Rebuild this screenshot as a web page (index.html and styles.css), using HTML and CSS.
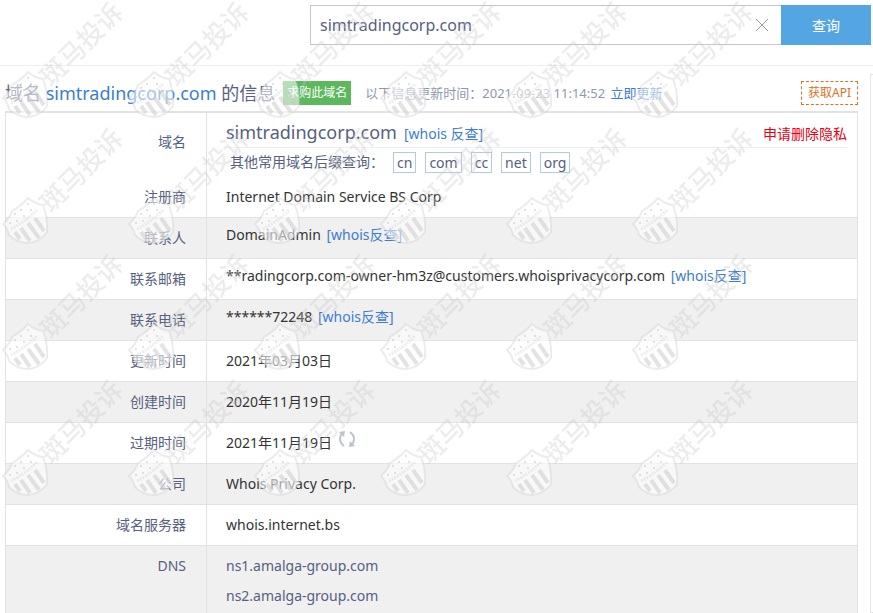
FILE: index.html
```html
<!DOCTYPE html>
<html lang="zh-CN">
<head>
    <meta charset="UTF-8">
    <meta name="viewport" content="width=device-width, initial-scale=1.0">
    <title>simtradingcorp.com 的信息</title>
    <link rel="stylesheet" href="styles.css">
</head>
<body>
    <header class="header">
        <form class="search" action="#">
            <div class="search-box">
                <input type="text" class="search-input" name="domain" value="simtradingcorp.com" aria-label="域名">
                <button type="reset" class="search-clear" aria-label="清空">
                    <svg width="14" height="14" viewBox="0 0 14 14"><path d="M1 1L13 13M13 1L1 13" stroke="#9a9a9a" fill="none"/></svg>
                </button>
            </div>
            <button type="submit" class="search-btn">查询</button>
        </form>
    </header>

    <div class="page">
        <main class="main">
            <div class="title-bar">
                <h1 class="title">域名 <a href="#">simtradingcorp.com</a> 的信息</h1>
                <a class="buy" href="#">求购此域名</a>
                <p class="updated">以下信息更新时间：2021-09-23 11:14:52 <a href="#">立即更新</a></p>
                <a class="api" href="#">获取API</a>
            </div>

            <table class="info">
                <tr class="plain">
                    <th scope="row">域名</th>
                    <td class="domain">
                        <div class="domain-line">
                            <span class="domain-name">simtradingcorp.com</span>
                            <a href="#">[whois 反查]</a>
                            <a class="privacy" href="#">申请删除隐私</a>
                        </div>
                        <div class="suffix-line">
                            <span class="suffix-label">其他常用域名后缀查询：</span>
                            <a href="#">cn</a>
                            <a href="#">com</a>
                            <a href="#">cc</a>
                            <a href="#">net</a>
                            <a href="#">org</a>
                        </div>
                    </td>
                </tr>
                <tr><th scope="row">注册商</th><td>Internet Domain Service BS Corp</td></tr>
                <tr class="gray contact"><th scope="row">联系人</th><td>DomainAdmin <a href="#">[whois反查]</a></td></tr>
                <tr class="contact"><th scope="row">联系邮箱</th><td>**radingcorp.com-owner-hm3z@customers.whoisprivacycorp.com <a href="#">[whois反查]</a></td></tr>
                <tr class="gray contact"><th scope="row">联系电话</th><td>******72248 <a href="#">[whois反查]</a></td></tr>
                <tr><th scope="row">更新时间</th><td>2021年03月03日</td></tr>
                <tr class="gray"><th scope="row">创建时间</th><td>2020年11月19日</td></tr>
                <tr>
                    <th scope="row">过期时间</th>
                    <td>2021年11月19日
                        <button type="button" class="refresh" aria-label="刷新">
                            <svg width="18" height="18" viewBox="0 0 18 18">
                                <path d="M4 3Q2 6 2 9Q2 13 6 16M14 15Q16 12 16 9Q16 5 12 2" fill="none" stroke="#bcc2ce" stroke-width="2"/>
                                <path d="M1 2L7 1L6 7ZM17 16L11 17L12 11Z" fill="#bcc2ce"/>
                            </svg>
                        </button>
                    </td>
                </tr>
                <tr class="gray"><th scope="row">公司</th><td>Whois Privacy Corp.</td></tr>
                <tr><th scope="row">域名服务器</th><td>whois.internet.bs</td></tr>
                <tr class="gray dns"><th scope="row">DNS</th><td>ns1.amalga-group.com<br>ns2.amalga-group.com</td></tr>
            </table>
        </main>
        <aside class="side"></aside>
    </div>

    <svg class="watermark" width="756" height="504" aria-hidden="true">
        <defs>
            <pattern id="mark" width="126" height="126" patternUnits="userSpaceOnUse">
                <path d="M3 98Q10 92 12 85Q21 80 28 72Q35 78 43 79Q48 92 47 106Q40 116 28 117Q17 117 9 109Q8 103 3 98Z" fill="#fff" fill-opacity=".55" stroke="#c8c8c8" stroke-opacity=".35" stroke-width="2" stroke-linejoin="round"/>
                <g stroke="#c8c8c8" stroke-opacity=".5" stroke-width="4">
                    <path d="M15 106L20 113M21 102L30 115M28 97L39 112M35 92L44 105"/>
                </g>
                <path d="M11 103Q25 96 37 84" fill="none" stroke="#c8c8c8" stroke-opacity=".3" stroke-width="3" stroke-dasharray="2 1"/>
                <g fill="#c8c8c8" fill-opacity=".7">
                    <circle cx="10" cy="97" r="1"/><circle cx="15" cy="88" r="1"/><circle cx="21" cy="84" r="1"/><circle cx="28" cy="78" r="1"/>
                    <circle cx="17" cy="95" r="1"/><circle cx="24" cy="90" r="1"/><circle cx="31" cy="84" r="1"/>
                </g>
                <text class="watermark-text" transform="translate(54 72) rotate(-45)" x="-13" y="9">斑马投诉</text>
            </pattern>
        </defs>
        <rect width="756" height="504" fill="url(#mark)"/>
    </svg>
</body>
</html>
```

FILE: styles.css
```css
* {
    box-sizing: border-box;
}
body {
    margin: 0;
    position: relative;
    overflow-x: hidden;
    background: #fff;
    color: #333;
    font-family: "Noto Sans", "Noto Sans CJK SC", sans-serif;
    font-size: 14px;
    line-height: 20px;
}
a {
    color: #3b7dd0;
    text-decoration: none;
}
button {
    font-family: inherit;
    cursor: pointer;
}
.header {
    padding: 5px 2px 20px;
    border-bottom: 1px solid #eee;
}
.search {
    display: flex;
    justify-content: flex-end;
}
.search-box {
    display: flex;
    flex: 0 1 471px;
    height: 40px;
    border: 1px solid #c3c7d4;
    border-right: none;
}
.search-input {
    flex: 1;
    min-width: 0;
    padding: 0 9px;
    border: none;
    outline: none;
    color: #566080;
    font-family: inherit;
    font-size: 16px;
}
.search-clear {
    display: flex;
    align-items: center;
    padding: 0 12px;
    border: none;
    background: none;
}
.search-btn {
    width: 90px;
    border: none;
    background: #54a6e2;
    color: #fff;
    font-size: 14px;
}
.page {
    display: flex;
}
.main {
    flex: 1;
    min-width: 0;
    padding: 0 12px 0 5px;
}
.side {
    width: 3px;
    margin-top: 8px;
    border: 1px solid #e4e4e4;
    border-right: none;
}
.title-bar {
    display: flex;
    align-items: center;
    height: 45px;
    padding-top: 8px;
}
.title {
    margin: 0 8px 0 0;
    color: #566080;
    font-size: 18px;
    font-weight: normal;
}
.buy {
    padding: 0 4px;
    background: #5cb85c;
    color: #fff;
    font-size: 12px;
    line-height: 24px;
}
.updated {
    margin: 0 auto 0 14px;
    color: #8f98ad;
    font-size: 13px;
}
.updated a {
    margin-left: 2px;
}
.api {
    padding: 0 6px;
    border: 1px dashed #e0701c;
    color: #e0701c;
    font-size: 12px;
    line-height: 22px;
}
.info {
    width: 100%;
    border: 1px solid #e2e2e2;
    border-top-width: 2px;
    border-bottom: none;
    border-spacing: 0;
}
.info th, .info td {
    height: 41px;
    padding: 0 20px 0 19px;
    border-bottom: 1px solid #e2e2e2;
    text-align: left;
}
.info th {
    width: 201px;
    border-right: 1px solid #e2e2e2;
    color: #566080;
    font-weight: normal;
    text-align: right;
}
.info .plain th, .info .plain td {
    border-bottom: none;
}
.info .plain th {
    padding-bottom: 6px;
}
.info .gray {
    background: #f0f0f0;
}
.info .contact td {
    padding-bottom: 6px;
}
.contact a {
    margin-left: 2px;
}
.info .domain {
    padding: 3px 10px 1px 19px;
    color: #566080;
}
.domain-line {
    display: flex;
    align-items: baseline;
    gap: 7px;
    height: 32px;
    border-bottom: 1px solid #eee;
    line-height: 32px;
}
.domain-name {
    font-size: 18px;
}
.domain-line .privacy {
    margin-left: auto;
    color: #e60012;
}
.suffix-line {
    display: flex;
    align-items: center;
    gap: 9px;
    height: 28px;
    padding-left: 4px;
}
.suffix-line a {
    padding: 0 3px;
    border: 1px solid #b3cbe0;
    color: #566080;
    line-height: 19px;
}
.refresh {
    margin: -4px 0 0 2px;
    padding: 0;
    border: none;
    background: none;
    line-height: 0;
    vertical-align: baseline;
}
.info .dns th, .info .dns td {
    padding-top: 5px;
    border-bottom: none;
    line-height: 30px;
    vertical-align: top;
}
.info .dns td {
    padding-bottom: 2px;
    color: #566080;
}
.watermark {
    position: absolute;
    top: 0;
    left: 0;
    pointer-events: none;
}
.watermark-text {
    fill: #c8c8c8;
    fill-opacity: .35;
    font-size: 26px;
    font-weight: 500;
}
```
